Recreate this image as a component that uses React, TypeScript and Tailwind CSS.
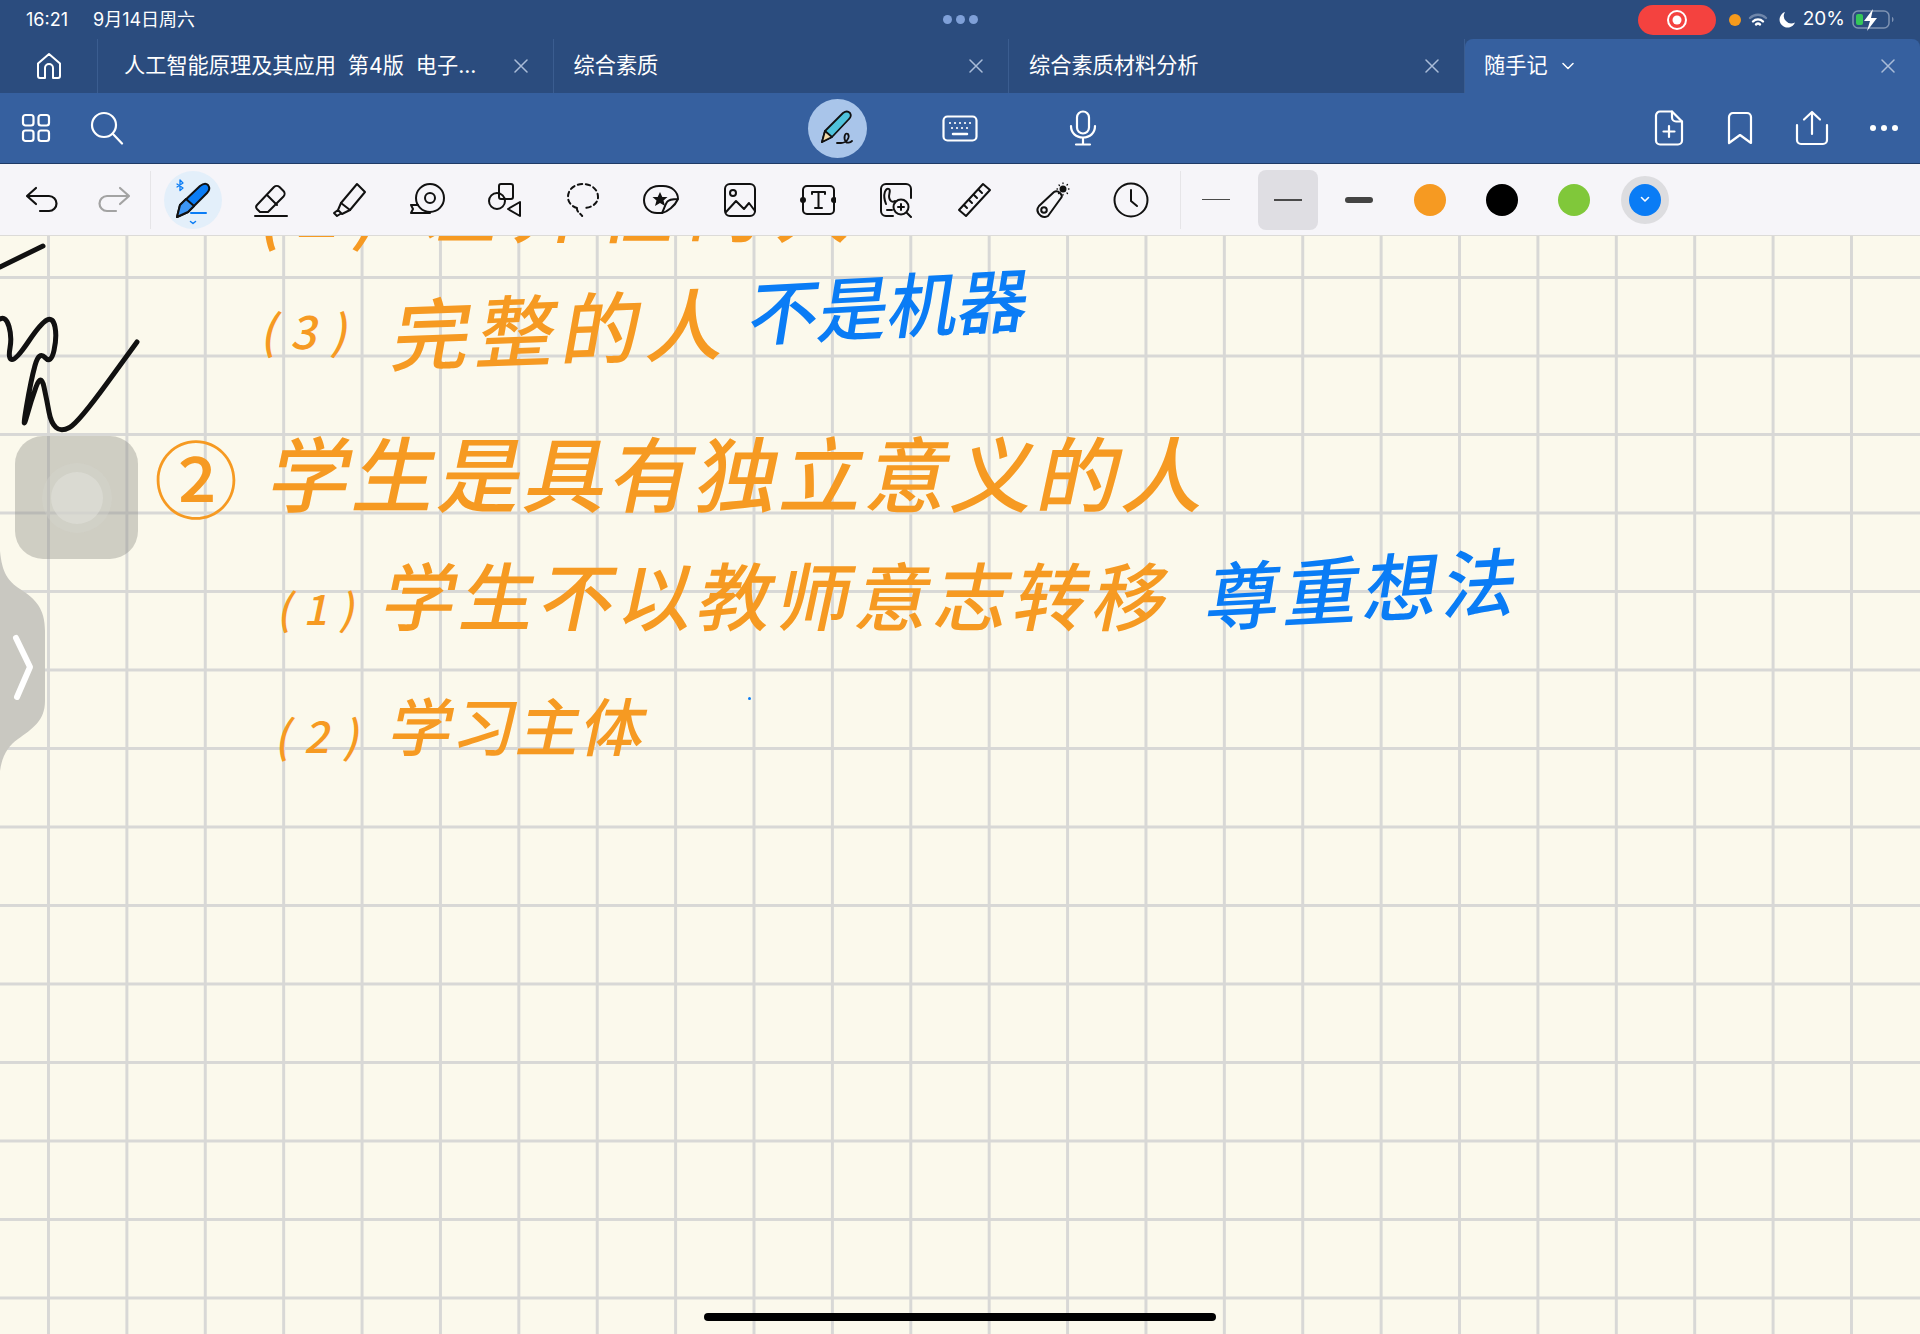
import { ReactNode } from "react";

const ink = (points: number[][]) => {
  let d = `M${points[0][0]} ${points[0][1]}`;
  for (let i = 1; i < points.length - 1; i++) {
    const mx = (points[i][0] + points[i + 1][0]) / 2;
    const my = (points[i][1] + points[i + 1][1]) / 2;
    d += ` Q${points[i][0]} ${points[i][1]} ${mx} ${my}`;
  }
  const last = points[points.length - 1];
  return `${d} L${last[0]} ${last[1]}`;
};

const tabs = [
  { title: "人工智能原理及其应用  第4版  电子...", padding: "pl-[26px]" },
  { title: "综合素质", padding: "pl-[20px]" },
  { title: "综合素质材料分析", padding: "pl-[20px]" },
];

function Icon({ size = 36, children, className }: { size?: number; children: ReactNode; className?: string }) {
  return (
    <svg width={size} height={size} viewBox="0 0 36 36" fill="none" stroke="currentColor" strokeWidth="2" strokeLinecap="round" strokeLinejoin="round" className={className}>
      {children}
    </svg>
  );
}

function CloseX() {
  return (
    <svg width="14" height="14" viewBox="0 0 14 14" stroke="#a9bcd8" strokeWidth="1.5" strokeLinecap="round">
      <path d="M1 1l12 12M13 1L1 13" />
    </svg>
  );
}

function Tool({ children }: { children: ReactNode }) {
  return <div className="flex w-[78.2px] shrink-0 items-center justify-center text-[#111]">{children}</div>;
}

function Ink({ className, children }: { className: string; children: ReactNode }) {
  return <div className={`absolute whitespace-nowrap leading-none -skew-x-12 ${className}`}>{children}</div>;
}

function Dot({ color }: { color: string }) {
  return (
    <div className="flex w-[71.6px] shrink-0 justify-center">
      <div className={`h-8 w-8 rounded-full ${color}`} />
    </div>
  );
}

export default function App() {
  return (
    <div className="flex h-[1334px] w-[1920px] flex-col overflow-hidden bg-[#fbf9ec] text-white [font-family:Inter,'Noto_Sans_CJK_SC',sans-serif]">
      {/* status bar + tabs */}
      <div className="h-[93px] shrink-0 bg-[#2b4c7e]">
        <div className="relative flex h-[39px] items-center pl-[26px] pr-[24px] text-[18px]">
          <span>16:21</span>
          <span className="ml-[25px]">9月14日周六</span>
          <div className="absolute left-[943px] top-[15px] flex gap-[4px]">
            <div className="h-[9px] w-[9px] rounded-full bg-[#7fa0d8]" />
            <div className="h-[9px] w-[9px] rounded-full bg-[#7fa0d8]" />
            <div className="h-[9px] w-[9px] rounded-full bg-[#7fa0d8]" />
          </div>
          <div className="ml-auto flex items-center">
            <div className="flex h-[30px] w-[78px] items-center justify-center rounded-full bg-[#f4423f]">
              <svg width="22" height="22" viewBox="0 0 22 22">
                <circle cx="11" cy="11" r="9" fill="none" stroke="#fff" strokeWidth="2" />
                <circle cx="11" cy="11" r="4.5" fill="#fff" />
              </svg>
            </div>
            <div className="ml-[13px] h-[12px] w-[12px] rounded-full bg-[#f59a1c]" />
            <svg className="ml-[7px]" width="20" height="16" viewBox="0 0 20 16" fill="none" strokeLinecap="round">
              <path d="M2 6a11.500 11.500 0 0 1 16 0" stroke="#6f86aa" strokeWidth="2.400" />
              <path d="M5 9.500a7 7 0 0 1 10 0" stroke="#fff" strokeWidth="2.400" />
              <path d="M8 12.500a3 3 0 0 1 4 0" stroke="#fff" strokeWidth="2.400" />
            </svg>
            <svg className="ml-[9.500px]" width="18" height="18" viewBox="0 0 18 18">
              <path d="M7 1a8 8 0 1 0 10 10.500A7.500 7.500 0 0 1 7 1z" fill="#fff" />
            </svg>
            <span className="ml-[7px] text-[19px]">20%</span>
            <svg className="ml-[7px]" width="44" height="22" viewBox="0 0 44 22">
              <rect x="1" y="2" width="36" height="17" rx="5" fill="none" stroke="#7f93b3" strokeWidth="1.500" />
              <rect x="4" y="5" width="7" height="11" rx="2" fill="#34c759" />
              <path d="M40 8v5c2-.5 2-4.500 0-5z" fill="#7f93b3" />
              <path d="M21 0l-9 12h6l-3 10 10-13h-6z" fill="#fff" />
            </svg>
          </div>
        </div>
        <div className="flex h-[54px]">
          <div className="flex w-[98px] shrink-0 items-center justify-center border-r border-[#3b5d90]">
            <svg width="26" height="28" viewBox="0 0 26 28" fill="none" stroke="#fff" strokeWidth="2" strokeLinejoin="round" strokeLinecap="round">
              <path d="M2 11.500L13 2l11 9.500V24a2 2 0 0 1-2 2h-5V16a4 4 0 0 0-8 0v10H4a2 2 0 0 1-2-2z" />
            </svg>
          </div>
          {tabs.map((tab) => (
            <div key={tab.title} className={`flex w-[455.5px] shrink-0 items-center border-r border-[#3b5d90] ${tab.padding} pr-[25px] text-[21.2px] last:rounded-br-lg last:border-r-0`}>
              <span className="whitespace-pre">{tab.title}</span>
              <div className="ml-auto">
                <CloseX />
              </div>
            </div>
          ))}
          <div className="flex flex-1 items-center rounded-t-lg bg-[#36609f] pl-[19.500px] pr-[25px] text-[21.2px]">
            <span>随手记</span>
            <svg className="ml-[14px]" width="12" height="8" viewBox="0 0 12 8" fill="none" stroke="#fff" strokeWidth="1.500" strokeLinecap="round" strokeLinejoin="round">
              <path d="M1 1.500l5 5 5-5" />
            </svg>
            <div className="ml-auto">
              <CloseX />
            </div>
          </div>
        </div>
      </div>

      {/* blue action row */}
      <div className="grid h-[71px] shrink-0 grid-cols-[1fr_auto_1fr] items-center border-b border-[#1f3a66] bg-[#36609f]">
        <div className="flex items-center pl-[21px]">
          <svg width="30" height="30" viewBox="0 0 30 30" fill="none" stroke="#fff" strokeWidth="2.200">
            <rect x="2" y="2" width="10.500" height="10.500" rx="2.500" />
            <rect x="17.500" y="2" width="10.500" height="10.500" rx="2.500" />
            <rect x="2" y="17.500" width="10.500" height="10.500" rx="2.500" />
            <rect x="17.500" y="17.500" width="10.500" height="10.500" rx="2.500" />
          </svg>
          <svg className="ml-[39px]" width="34" height="34" viewBox="0 0 34 34" fill="none" stroke="#fff" strokeWidth="2.200" strokeLinecap="round">
            <circle cx="14" cy="14" r="12" />
            <path d="M23 23l9 9.500" />
          </svg>
        </div>
        <div className="flex items-center">
          <div className="flex w-[123px] justify-center">
            <div className="flex h-[59px] w-[59px] items-center justify-center rounded-full bg-[#a9c5ea]">
              <svg width="44" height="44" viewBox="0 0 44 44" fill="none" stroke="#111" strokeWidth="1.800" strokeLinejoin="round" strokeLinecap="round">
                <path d="M7 36l3-11L28 7q4-3 7 0 2 3-1 6L17 31z" fill="#4fc3dc" />
                <path d="M7 36l3-11 7 6z" fill="#f1d9a7" />
                <path d="M22 37h4c6 0 9-6 7-9-3-2-5 4-2 8 1 1 4 1 6-1" />
              </svg>
            </div>
          </div>
          <div className="flex w-[123px] justify-center">
            <svg width="36" height="27" viewBox="0 0 36 27" fill="none" stroke="#fff" strokeWidth="2.200" strokeLinecap="round">
              <rect x="1.500" y="1.500" width="33" height="24" rx="4" />
              <path d="M8 8h.01M13 8h.01M18 8h.01M23 8h.01M28 8h.01M10 13h.01M15 13h.01M20 13h.01M25 13h.01" />
              <path d="M11 19h14" strokeWidth="2.500" />
            </svg>
          </div>
          <div className="flex w-[123px] justify-center">
            <svg width="28" height="36" viewBox="0 0 28 36" fill="none" stroke="#fff" strokeWidth="2.200" strokeLinecap="round">
              <rect x="8" y="1.500" width="12" height="22" rx="6" />
              <path d="M2 16c0 7 5 11.500 12 11.500S26 23 26 16M14 27.500V34M7 34.500h14" />
            </svg>
          </div>
        </div>
        <div className="flex items-center justify-end pr-[22px]">
          <svg width="30" height="36" viewBox="0 0 30 36" fill="none" stroke="#fff" strokeWidth="2.200" strokeLinecap="round" strokeLinejoin="round">
            <path d="M18 1.500H6a4 4 0 0 0-4 4v25a4 4 0 0 0 4 4h18a4 4 0 0 0 4-4V11.500z" />
            <path d="M18 1.500v6a4 4 0 0 0 4 4h6M15 16v11M9.500 21.500h11" />
          </svg>
          <svg className="ml-[43px]" width="26" height="34" viewBox="0 0 26 34" fill="none" stroke="#fff" strokeWidth="2.200" strokeLinejoin="round">
            <path d="M2 32V6a4 4 0 0 1 4-4h14a4 4 0 0 1 4 4v26l-11-8z" />
          </svg>
          <svg className="ml-[42px]" width="34" height="36" viewBox="0 0 34 36" fill="none" stroke="#fff" strokeWidth="2.200" strokeLinecap="round" strokeLinejoin="round">
            <path d="M2 15v15a4 4 0 0 0 4 4h22a4 4 0 0 0 4-4V15M17 24V2M9 9.500L17 2l8 7.500" />
          </svg>
          <div className="ml-[41px] flex gap-[5px]">
            <div className="h-[6px] w-[6px] rounded-full bg-white" />
            <div className="h-[6px] w-[6px] rounded-full bg-white" />
            <div className="h-[6px] w-[6px] rounded-full bg-white" />
          </div>
        </div>
      </div>

      {/* pen toolbar */}
      <div className="flex h-[72px] shrink-0 items-center border-b border-[#dcdbd8] bg-[#f6f5f9] pl-[6px]">
        <div className="flex w-[72px] justify-center text-[#111]">
          <svg width="34" height="28" viewBox="0 0 34 28" fill="none" stroke="currentColor" strokeWidth="2.200" strokeLinecap="round" strokeLinejoin="round">
            <path d="M11 2L2 10l9 8M3 10h21a7 7 0 0 1 0 15H15" />
          </svg>
        </div>
        <div className="flex w-[72px] justify-center text-[#a3a3a3]">
          <svg width="34" height="28" viewBox="0 0 34 28" fill="none" stroke="currentColor" strokeWidth="2.200" strokeLinecap="round" strokeLinejoin="round">
            <path d="M23 2l9 8-9 8M31 10H10a7 7 0 0 0 0 15h9" />
          </svg>
        </div>
        <div className="h-[58px] w-px shrink-0 bg-[#e6e5e8]" />
        <div className="ml-[12.600px] h-[58px] w-[58px] shrink-0 rounded-full bg-[#e3effa]">
          <svg width="58" height="58" viewBox="0 0 58 58" fill="none" strokeLinecap="round" strokeLinejoin="round">
            <path d="M13 46l3-12L36 15q5-4 8-1 3 4-1 8L24 41z" fill="#0a7cf5" stroke="#111" strokeWidth="2" />
            <path d="M13 46l3-12 6-6 8 7-6 6z" fill="#3d96f5" stroke="#111" strokeWidth="2" />
            <path d="M27 42h15" stroke="#0a7cf5" strokeWidth="2" />
            <path d="M26.500 50.500l2.500 2 2.500-2" stroke="#0a7cf5" strokeWidth="1.500" />
            <path d="M13 13l6 4-3 2.500V9l3 3-6 4" stroke="#0a7cf5" strokeWidth="1.300" />
          </svg>
        </div>
        <div className="ml-[9.800px] flex">
          <Tool>
            <Icon>
              <path d="M3 34h32" />
              <path d="M8 30l-3-3a3 3 0 0 1 0-4L22 5a4 4 0 0 1 5.500 0l4 4a4 4 0 0 1 0 5.500L16 30z" />
              <path d="M15 13l10 10" />
            </Icon>
          </Tool>
          <Tool>
            <Icon>
              <path d="M26 2l8 8-15 18-9-7z" />
              <path d="M10 21l-3 7 4 4 8-4M7 28l-4 3 3 3 4-2.500" />
            </Icon>
          </Tool>
          <Tool>
            <Icon>
              <circle cx="21" cy="16" r="14" />
              <circle cx="21" cy="16" r="5" />
              <path d="M2 31h19M2 31l2-4-2-4h7" />
            </Icon>
          </Tool>
          <Tool>
            <Icon>
              <rect x="12" y="2" width="14" height="15" rx="2" />
              <circle cx="10" cy="19" r="8" />
              <path d="M33 20v14L21 27z" />
            </Icon>
          </Tool>
          <Tool>
            <Icon>
              <path d="M12 26C6 24 3 20 3 15 3 7 10 2 18 2s15 5 15 13c0 7-7 11-15 11" strokeDasharray="4.500 3.500" />
              <path d="M12 27c0 3 3 4 6 8" strokeDasharray="3 3" />
            </Icon>
          </Tool>
          <Tool>
            <svg width="38" height="36" viewBox="0 0 38 36" fill="none" stroke="#111" strokeWidth="2" strokeLinejoin="round">
              <path d="M20 31H15C7 31 2 25 2 18S8 4 17 4h4c9 0 15 6 15 13-4 0-9 0-11 3-2 3-3 7-5 11z" />
              <path d="M20 31c5-1 13-7 16-14" />
              <path d="M18 10l2.300 5h5.200l-4 3.500 1.500 5.500-5-3-5 3 1.500-5.500-4-3.500h5.200z" fill="#111" stroke="none" />
            </svg>
          </Tool>
          <Tool>
            <Icon>
              <rect x="3" y="2" width="30" height="32" rx="5" />
              <circle cx="11" cy="11" r="3" />
              <path d="M4 30l10-11 8 8 5-6 6 8" />
            </Icon>
          </Tool>
          <Tool>
            <Icon>
              <rect x="3" y="4" width="31" height="28" rx="4" />
              <path d="M12 12v-2h13v2M18.500 10v16M15 26h7" />
              <circle cx="3" cy="18" r="2" fill="#111" />
              <circle cx="34" cy="18" r="2" fill="#111" />
            </Icon>
          </Tool>
          <Tool>
            <Icon>
              <path d="M20 2H8a5 5 0 0 0-5 5v22a5 5 0 0 0 5 5h7M28 2a5 5 0 0 1 5 5v9M20 2h8" />
              <path d="M8 22C4 12 8 5 11 7c3 2-3 8 2 12 1.500 1 3 1 4 0M9 28h5" />
              <circle cx="23" cy="25" r="7.500" />
              <path d="M23 22v6M20 25h6M29 31l4 4" />
            </Icon>
          </Tool>
          <Tool>
            <Icon>
              <path d="M27 2l7 6L10 34l-7-6z" />
              <path d="M8 23l3 3M13 18l3 3M18 13l3 3M23 8l3 3" />
            </Icon>
          </Tool>
          <Tool>
            <Icon>
              <path d="M5 24L20 10q3-2 6 1t1 5L14 34q-3 2-7 0-6-5-2-10z" />
              <circle cx="10" cy="28" r="2.800" />
              <circle cx="29" cy="7" r="2.500" fill="#111" />
              <path d="M29 1v.5M29 12.500v.5M23 7h.5M34.500 7h.5M25 3l.5.5M33 11l.5.5M33 3l.5-.5M25 11l-.5.5" strokeWidth="1.300" />
            </Icon>
          </Tool>
          <Tool>
            <Icon>
              <circle cx="18" cy="18" r="16.500" />
              <path d="M18 8v11l6 5" />
            </Icon>
          </Tool>
        </div>
        <div className="ml-[10px] h-[58px] w-px shrink-0 bg-[#e6e5e8]" />
        <div className="ml-[5.500px] flex h-[60px] w-[60px] items-center justify-center">
          <div className="h-[1.500px] w-[28px] bg-[#4a4a4a]" />
        </div>
        <div className="ml-[11.500px] flex h-[60px] w-[60px] items-center justify-center rounded-lg bg-[#dfdee3]">
          <div className="h-[2px] w-[28px] bg-[#4a4a4a]" />
        </div>
        <div className="ml-[11px] flex h-[60px] w-[60px] items-center justify-center">
          <div className="h-[6px] w-[28px] rounded-full bg-[#444]" />
        </div>
        <div className="ml-[6px] flex items-center">
          <Dot color="bg-[#f69a22]" />
          <Dot color="bg-black" />
          <Dot color="bg-[#80c83a]" />
          <div className="flex w-[71.600px] shrink-0 justify-center">
            <div className="flex h-12 w-12 items-center justify-center rounded-full bg-[#dddde0]">
              <div className="flex h-8 w-8 items-center justify-center rounded-full bg-[#0a7cf5]">
                <svg width="10" height="7" viewBox="0 0 10 7" fill="none" stroke="#fff" strokeWidth="1.600" strokeLinecap="round" strokeLinejoin="round">
                  <path d="M1.500 1.500L5 5l3.500-3.500" />
                </svg>
              </div>
            </div>
          </div>
        </div>
      </div>

      {/* note canvas */}
      <div className="relative flex-1 overflow-hidden bg-[#fbf9ec] bg-[linear-gradient(to_right,#d8d8d6_2.500px,transparent_2.500px),linear-gradient(to_bottom,#d8d8d6_2.500px,transparent_2.500px)] bg-[size:78.400px_78.500px] bg-[position:47px_40px] font-medium [font-family:'Noto_Sans_CJK_SC',sans-serif]">
        <Ink className="left-[262px] top-[-68px] text-[74px] tracking-[14px] text-[#f69a22]">(2) 差异性的人</Ink>

        <Ink className="left-[264px] top-[70px] text-[46px] tracking-[14px] text-[#f69a22]">(3)</Ink>
        <Ink className="left-[395px] top-[50px] -rotate-2 text-[78px] tracking-[7px] text-[#f69a22]">完整的人</Ink>
        <Ink className="left-[750px] top-[32px] -rotate-3 text-[70px] tracking-[0px] text-[#0a7cf5]">不是机器</Ink>

        <div className="absolute left-[154px] top-[198px] text-[84px] leading-none text-[#f69a22]">②</div>
        <Ink className="left-[272px] top-[194px] text-[82px] tracking-[3.500px] text-[#f69a22]">学生是具有独立意义的人</Ink>

        <Ink className="left-[280px] top-[350px] text-[42px] tracking-[12px] text-[#f69a22]">(1)</Ink>
        <Ink className="left-[385px] top-[320px] text-[74px] tracking-[5px] text-[#f69a22]">学生不以教师意志转移</Ink>
        <Ink className="left-[1208px] top-[312px] -rotate-3 text-[74px] tracking-[5px] text-[#0a7cf5]">尊重想法</Ink>

        <Ink className="left-[278px] top-[476px] text-[44px] tracking-[14px] text-[#f69a22]">(2)</Ink>
        <Ink className="left-[392px] top-[456px] text-[63px] tracking-[1px] text-[#f69a22]">学习主体</Ink>

        {/* loose ink on the page */}
        <svg className="absolute left-0 top-0" width="150" height="210" viewBox="0 236 150 210" fill="none" stroke="#111" strokeWidth="5" strokeLinecap="round" strokeLinejoin="round">
          <path d="M0 267L43 246" strokeWidth="5" />
          <path d={ink([[0, 319], [6, 316], [12, 337], [8, 359], [16, 360], [41, 323], [53, 317], [57, 337], [51, 364], [39, 351], [31, 380], [22, 433], [31, 401], [41, 373], [47, 401], [51, 423], [61, 432], [78, 423], [137, 342]])} />
        </svg>
        <div className="absolute left-[748px] top-[461px] h-[3px] w-[3px] rounded-full bg-[#0a7cf5]" />

        {/* assistive touch */}
        <div className="absolute left-[15px] top-[200px] flex h-[123px] w-[123px] items-center justify-center rounded-[28px] bg-[#8f8f88]/40">
          <div className="flex h-[70px] w-[70px] items-center justify-center rounded-full bg-[#d6d6d0]/30">
            <div className="h-[52px] w-[52px] rounded-full bg-[#e4e4de]/50" />
          </div>
        </div>

        {/* side drawer handle */}
        <svg className="absolute left-0 top-[315px]" width="46" height="220" viewBox="0 0 46 220">
          <path d="M0 0C2 22 8 30 20 38C36 48 45 58 45 80L45 150C45 170 32 178 18 188C8 195 2 205 0 220Z" fill="#c9c8c1" />
          <path d="M16 87L30 116L17 146" fill="none" stroke="#fff" strokeWidth="6" strokeLinecap="round" strokeLinejoin="round" />
        </svg>

        <div className="absolute bottom-[13px] left-[704px] h-[8px] w-[512px] rounded-full bg-black" />
      </div>
    </div>
  );
}
